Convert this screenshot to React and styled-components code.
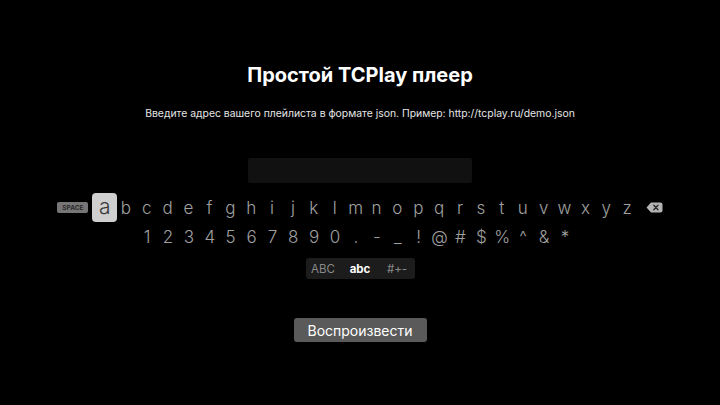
import React from 'react'
import styled, { createGlobalStyle } from 'styled-components'

const GlobalStyle = createGlobalStyle`
    html, body {
        margin: 0;
        padding: 0;
        background: #000;
    }
    body {
        font-family: Inter, "Noto Sans", "Liberation Sans", sans-serif;
    }
`

const Screen = styled.div`
    width: 720px;
    height: 405px;
    background: #000;
    display: flex;
    flex-direction: column;
    align-items: center;
    padding-top: 63px;
    box-sizing: border-box;
    overflow: hidden;
`

const Title = styled.h1`
    margin: 0;
    font-size: 20px;
    line-height: 24px;
    font-weight: 700;
    color: #fff;
`

const Hint = styled.p`
    margin: 20px 0 0;
    font-size: 10.4px;
    line-height: 14px;
    color: #e6e6e6;
`

const Field = styled.div`
    margin-top: 37px;
    width: 224px;
    height: 25px;
    background: #111;
    border-radius: 2px;
`

const Row = styled.div`
    display: flex;
    align-items: center;
    justify-content: center;
    margin-top: ${props => props.mt || 0}px;
    height: ${props => props.h}px;
    padding-right: ${props => props.shift || 0}px;
`

const Key = styled.div`
    width: 20.9px;
    height: 20px;
    display: flex;
    align-items: center;
    justify-content: center;
    font-size: 17px;
    font-weight: 300;
    color: #a0a0a0;
    flex-shrink: 0;
    ${props => props.focused && `
        width: 25px;
        height: 29px;
        margin: 0 -2px;
        background: #cfcfcf;
        border-radius: 4px;
        color: #3a3a3a;
        font-size: 21px;
        padding-bottom: 2px;
        box-sizing: border-box;
    `}
`

const SpaceKey = styled.div`
    width: 31px;
    height: 11px;
    margin-right: 6px;
    background: #767676;
    border-radius: 2px;
    color: #2a2a2a;
    font-size: 6.5px;
    font-weight: 700;
    display: flex;
    align-items: center;
    justify-content: center;
`

const DeleteKey = styled.svg`
    width: 17px;
    height: 11px;
    margin-left: 8px;
    flex-shrink: 0;
`

const ModeSwitch = styled.div`
    margin-top: 11px;
    width: 109px;
    height: 21px;
    background: #1c1c1c;
    border-radius: 3px;
    display: grid;
    grid-template-columns: repeat(3, 37px);
    justify-content: center;
    align-items: center;
    justify-items: center;
`

const Mode = styled.span`
    font-size: 11.5px;
    color: ${props => props.active ? '#fff' : '#8a8a8a'};
    font-weight: ${props => props.active ? 700 : 400};
`

const PlayButton = styled.button`
    margin-top: 39px;
    width: 133px;
    height: 24px;
    border: none;
    border-radius: 3px;
    background: #5a5a5a;
    color: #fff;
    font-family: inherit;
    font-size: 14px;
    padding: 0;
`

const letters = 'abcdefghijklmnopqrstuvwxyz'.split('')
const symbols = '1234567890.-_!@#$%^&*'.split('')

function Keyboard() {
    return <>
        <Row h = {29} mt = {10}>
            <SpaceKey>SPACE</SpaceKey>
            {
                letters.map((l, i) => <Key key = {l} focused = {i === 0}>{l}</Key>)
            }
            <DeleteKey viewBox = '0 0 17 11'>
                <path d = 'M0.5 5.5 L5 0.5 H14.5 A2 2 0 0 1 16.5 2.5 V8.5 A2 2 0 0 1 14.5 10.5 H5 Z' fill = '#b4b4b4'/>
                <path d = 'M7.8 3.3 L12 7.7 M12 3.3 L7.8 7.7' stroke = '#2a2a2a' strokeWidth = '1.4' strokeLinecap = 'round'/>
            </DeleteKey>
        </Row>
        <Row h = {20} mt = {5} shift = {8}>
            {
                symbols.map(s => <Key key = {s}>{s}</Key>)
            }
        </Row>
    </>
}

export default function App() {
    return (
        <Screen>
            <GlobalStyle/>
            <Title>Простой TCPlay плеер</Title>
            <Hint>Введите адрес вашего плейлиста в формате json. Пример: http://tcplay.ru/demo.json</Hint>
            <Field/>
            <Keyboard/>
            <ModeSwitch>
                <Mode>ABC</Mode>
                <Mode active>abc</Mode>
                <Mode>#+-</Mode>
            </ModeSwitch>
            <PlayButton>Воспроизвести</PlayButton>
        </Screen>
    )
}
